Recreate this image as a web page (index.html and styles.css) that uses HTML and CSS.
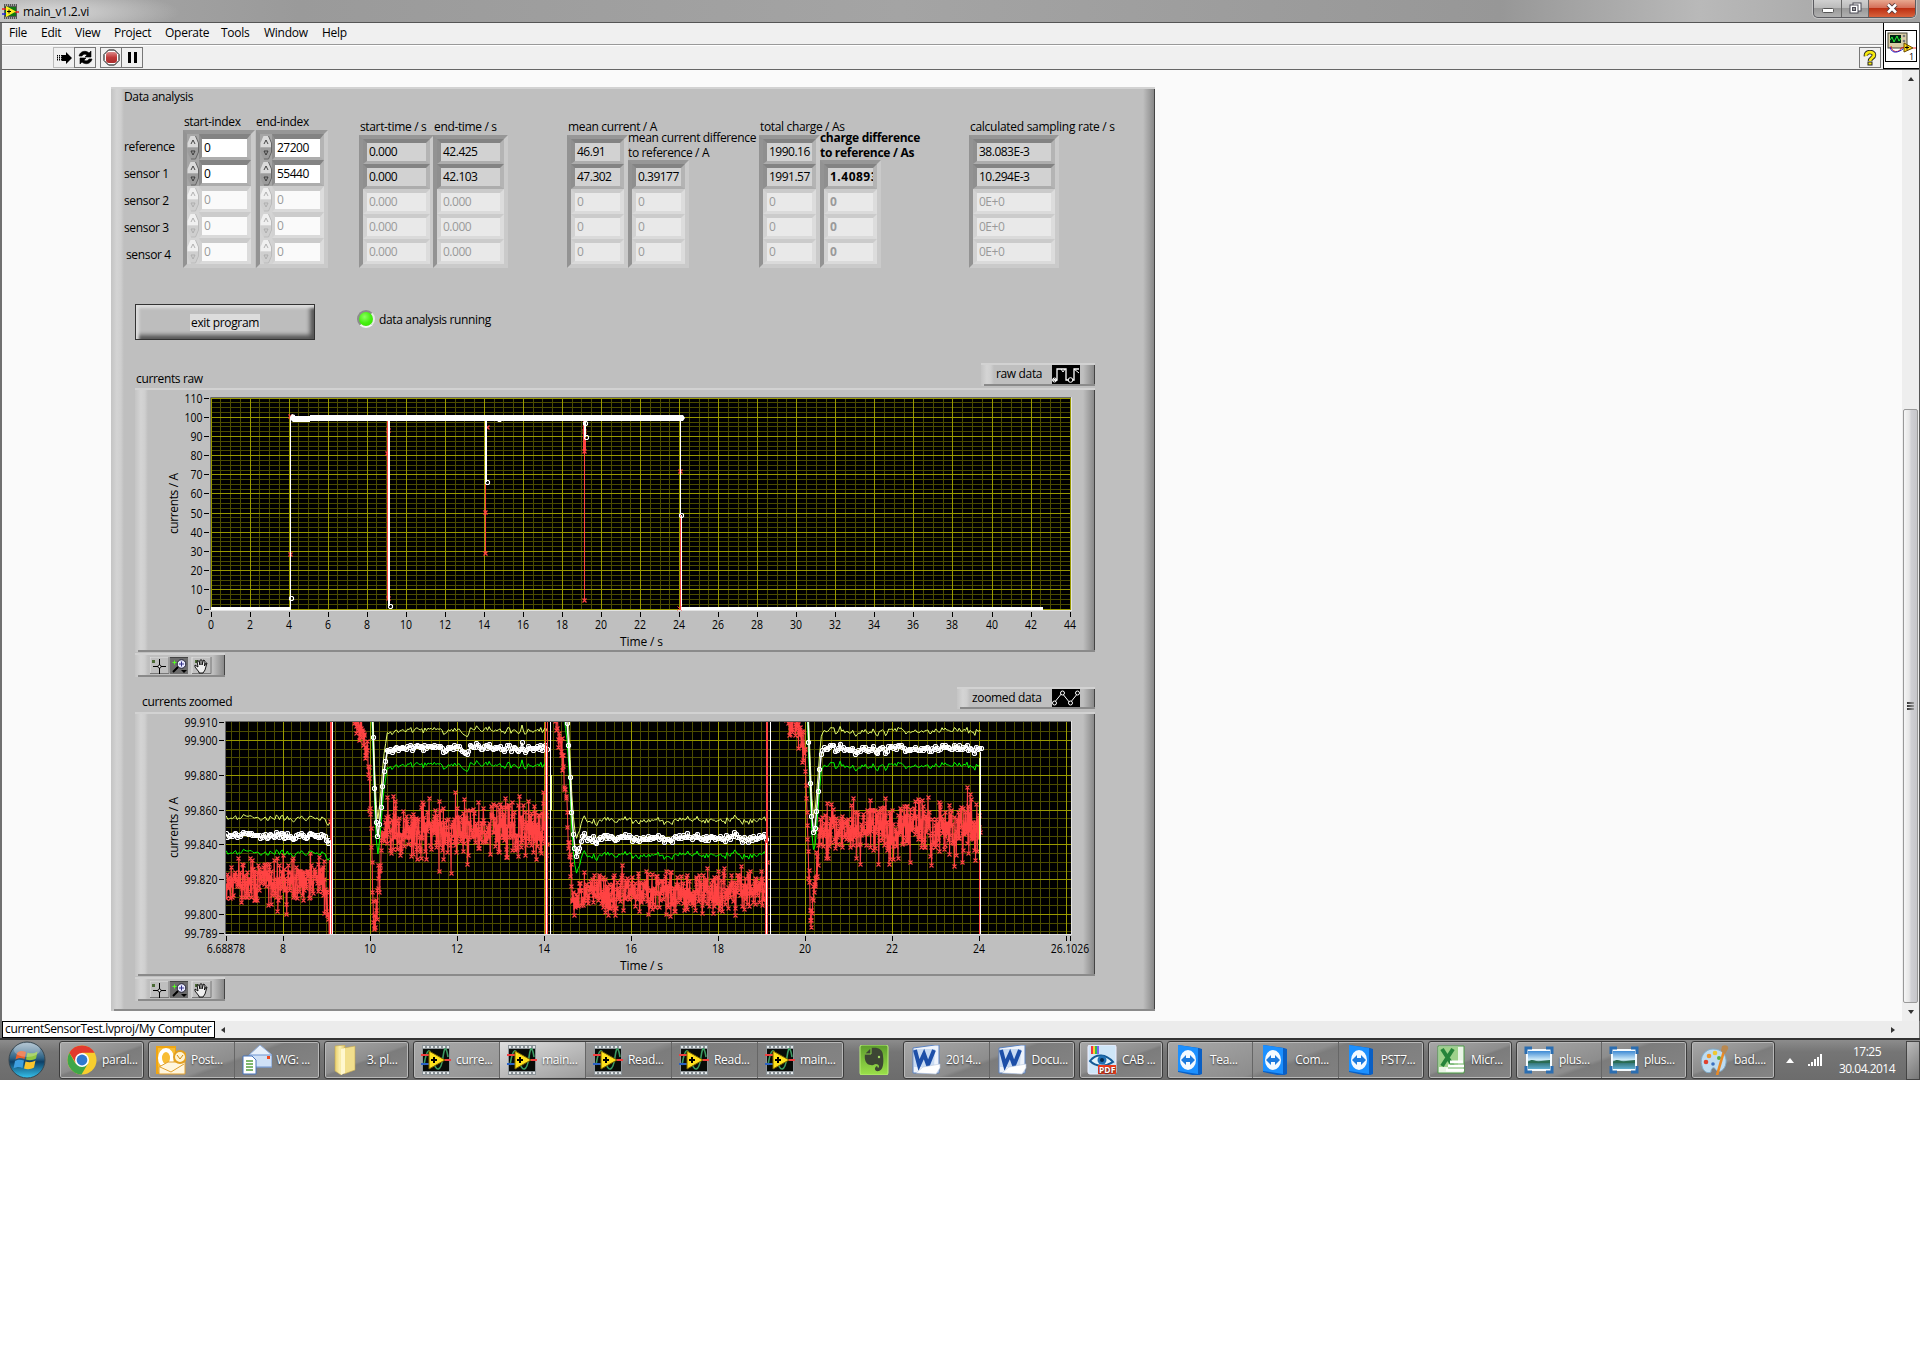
FILE: index.html
```html
<!DOCTYPE html>
<html lang="en">
<head>
<meta charset="utf-8">
<title>main_v1.2.vi</title>
<link rel="stylesheet" href="styles.css">
</head>
<body>
<svg class="defs" width="0" height="0">
  <defs>
    <linearGradient id="gOrb" x1="0" y1="0" x2="0" y2="1"><stop offset="0" stop-color="#9fb6c6"/><stop offset=".45" stop-color="#2d6285"/><stop offset=".55" stop-color="#0d3f66"/><stop offset="1" stop-color="#35c3ee"/></linearGradient>
    <linearGradient id="gFold" x1="0" y1="0" x2="1" y2="0"><stop offset="0" stop-color="#e9cf6c"/><stop offset=".5" stop-color="#fbf0b0"/><stop offset="1" stop-color="#e0c568"/></linearGradient>
    <linearGradient id="gGreen" x1="0" y1="0" x2="0" y2="1"><stop offset="0" stop-color="#5c9c2c"/><stop offset="1" stop-color="#9be04a"/></linearGradient>
    <linearGradient id="gSky" x1="0" y1="0" x2="0" y2="1"><stop offset="0" stop-color="#2d7fd0"/><stop offset=".5" stop-color="#d5effa"/><stop offset=".6" stop-color="#2d6d6a"/><stop offset="1" stop-color="#69b8e0"/></linearGradient>
    <linearGradient id="gStop" x1="0" y1="0" x2="0" y2="1"><stop offset="0" stop-color="#d88"/><stop offset=".5" stop-color="#c03a3a"/><stop offset="1" stop-color="#a82c2c"/></linearGradient>
    <symbol id="labview" viewBox="0 0 30 30">
      <rect x="1" y="0" width="28" height="30" fill="#8b9296"/>
      <path d="M2 2H28M2 28H28" stroke="#e4e8ea" stroke-width="2" stroke-dasharray="2 2"/>
      <rect x="2" y="4" width="26" height="22" fill="#080b08"/>
      <path d="M3 20C6 2 9 2 12 15S20 27 22 12S26 6 27 12" fill="none" stroke="#3c9a62" stroke-width="1.6"/>
      <path d="M0 10H9M22 15H30" stroke="#f04040" stroke-width="2"/><path d="M0 19H9" stroke="#2b62c4" stroke-width="2"/>
      <path d="M8 6L24 15L8 24Z" fill="#ffe11c" stroke="#7d6500"/><path d="M10 15H16M13 12V18" stroke="#000" stroke-width="2"/>
    </symbol>
    <symbol id="chrome" viewBox="0 0 30 30">
      <circle cx="15" cy="15" r="14.5" fill="#f7ce2e"/>
      <path d="M15 15L8.5 18.5L2.4 7.8A14.5 14.5 0 0 0 14.5 29.5L21 18.5Z" fill="#3fa648"/>
      <path d="M2.4 7.8A14.5 14.5 0 0 1 27.6 7.8H15L9 18Z" fill="#e23a2e"/>
      <circle cx="15" cy="15" r="7" fill="#fff"/><circle cx="15" cy="15" r="5.4" fill="#2f79cf"/>
    </symbol>
    <symbol id="outlook" viewBox="0 0 30 30">
      <path d="M0 1H20V29H0Z" fill="#f0a512"/><path d="M2 3H19V27H2Z" fill="#f8bd35"/>
      <ellipse cx="10" cy="13" rx="6" ry="8" fill="none" stroke="#fff" stroke-width="4"/>
      <path d="M12 17H29V29H3V22Z" fill="#fff6de" stroke="#e0a030"/><path d="M4 22L15 27L28 19" fill="none" stroke="#e0a030"/>
      <circle cx="24" cy="12" r="6" fill="#fff3d0" stroke="#e3a020" stroke-width="2"/><path d="M21 10L24 14L27 10" fill="none" stroke="#d08a10"/>
    </symbol>
    <symbol id="mail" viewBox="0 0 30 30">
      <path d="M7 10L18 0L30 10V22H7Z" fill="#e7f0fb" stroke="#90aedb"/><path d="M7 10H30V22H7Z" fill="#cfe0f6" stroke="#6f94cf"/>
      <rect x="25" y="11" width="3" height="3" fill="#f04a20"/>
      <path d="M1 11H10L14 15V29H1Z" fill="#fff" stroke="#4775bd"/>
      <path d="M4 16H11M4 19H11M4 22H11M4 25H11" stroke="#55a040" stroke-width="1.5"/>
    </symbol>
    <symbol id="folder" viewBox="0 0 30 30">
      <path d="M3 1L13 0V27L9 30L3 26Z" fill="url(#gFold)" stroke="#c5a850" stroke-width=".6"/>
      <path d="M12 3L23 1V25L12 29Z" fill="#f2df8d" stroke="#c5a850" stroke-width=".6"/><path d="M9 4L13 3V28L9 30Z" fill="#fff7cf"/>
    </symbol>
    <symbol id="evernote" viewBox="0 0 30 30">
      <rect x="1" y="0" width="28" height="30" rx="2" fill="url(#gGreen)" stroke="#b8f078"/>
      <path d="M6 9L12 3C19 2 24 4 24 11C25 18 24 25 20 26C15 27 15 22 18 21L19 23C21 22 20 19 17 19C14 19 15 21 12 20C7 20 5 15 6 9Z" fill="#3d4634"/>
      <path d="M6 9H12V3" fill="none" stroke="#8cd048"/><circle cx="20" cy="12" r="1.2" fill="#a5dc68"/>
    </symbol>
    <symbol id="word" viewBox="0 0 30 30">
      <path d="M2 3L24 0H28V28H2Z" fill="#eef3fb" stroke="#5c83c2"/><path d="M3 4H24L23 22H3Z" fill="#c9dbf3"/>
      <path d="M4 5L8 20L13 9L17 20L23 5" fill="none" stroke="#1d4fa8" stroke-width="4"/>
      <path d="M12 22L29 19V23L25 29L5 28Z" fill="#fff" stroke="#b5c5dc" stroke-width=".6"/>
    </symbol>
    <symbol id="pdf" viewBox="0 0 30 30">
      <rect x="1" y="0" width="28" height="29" rx="2" fill="#cfe6f8" stroke="#eef"/>
      <path d="M5 1V9" stroke="#e34" stroke-width="2"/><path d="M7 1V9" stroke="#fc3" stroke-width="2"/><path d="M9 1V9" stroke="#3b5" stroke-width="2"/><path d="M11 1V9" stroke="#76e" stroke-width="2"/>
      <path d="M3 16C9 8 19 9 26 17C18 22 9 22 3 16Z" fill="#dff2fb" stroke="#155a96" stroke-width="2"/><circle cx="15" cy="15" r="4.5" fill="#2271b4"/><circle cx="15" cy="15" r="2" fill="#042a50"/>
      <rect x="11" y="20" width="18" height="9" fill="#ee3b1c"/><text x="12" y="28" font-size="8.5" font-weight="700" fill="#fff" textLength="16">PDF</text>
    </symbol>
    <symbol id="teamviewer" viewBox="0 0 30 30">
      <path d="M3 0L24 3L27 4V29L22 31L3 27Z" fill="#0a5fc4"/><path d="M3 0L23 3V29L3 26Z" fill="#1c90ff"/>
      <ellipse cx="13" cy="15" rx="8" ry="10" fill="#f4faff"/><path d="M6 15L11 10V13H15V10L20 15L15 20V17H11V20Z" fill="#1c7ade"/>
    </symbol>
    <symbol id="excel" viewBox="0 0 30 30">
      <path d="M2 1H28V28H2Z" fill="#eaf5e6" stroke="#4b9a44"/><path d="M3 2H22V22H3Z" fill="#9ed18b"/>
      <path d="M6 4L17 21M17 4L6 21" stroke="#26843a" stroke-width="4"/><path d="M14 17H27M12 21H28M10 25H28" stroke="#fff" stroke-width="3"/><path d="M14 19H28M12 23H28" stroke="#76b86c"/>
    </symbol>
    <symbol id="viewer" viewBox="0 0 30 30">
      <rect x="3" y="5" width="24" height="20" fill="url(#gSky)" stroke="#f5fbff" stroke-width="2"/><path d="M4 17C9 12 12 18 17 16L26 15V18H4Z" fill="#2a6b52"/>
      <path d="M2 9V3H8M22 3H28V9M28 21V27H22M8 27H2V21" fill="none" stroke="#2b6db0" stroke-width="3"/>
    </symbol>
    <symbol id="paint" viewBox="0 0 30 30">
      <path d="M3 21C0 12 6 4 14 4C23 4 28 10 27 18C26 25 20 29 17 25C15 21 12 23 12 27C8 29 4 26 3 21Z" fill="#bfdcf0" stroke="#7faac8"/>
      <circle cx="7" cy="17" r="2.3" fill="#e0412e"/><circle cx="10" cy="11" r="2.3" fill="#f0962b"/><circle cx="16" cy="8" r="2.3" fill="#eec832"/><circle cx="20" cy="13" r="2" fill="#58b040"/><circle cx="14" cy="19" r="1.8" fill="#3c70c0"/>
      <path d="M25 6L18 30" stroke="#e88a26" stroke-width="2.6"/><path d="M23 1C27-1 30 1 29 4L26 9L22 6Z" fill="#b98850"/>
    </symbol>
    <symbol id="plotTools" viewBox="0 0 62 18">
      <path d="M0 17V0H19M42 17V0H61" fill="none" stroke="#e2e2e2"/><path d="M0 16.500H19V0M42 16.500H61V0" fill="none" stroke="#777"/>
      <rect x="20" y="0" width="18" height="17" fill="#6c6c6c"/><path d="M20 .5H38" stroke="#444"/>
      <rect x="2" y="3" width="3" height="3" fill="#4b6a35"/><rect x="45" y="3" width="3" height="3" fill="#4b6a35"/><path d="M22.500 5.500H26.500M24.500 3.500V7.500" stroke="#5f2" />
      <path d="M3 9.500H8M11 9.500H16M9.500 2V8M9.500 11V17" stroke="#000"/><circle cx="9.500" cy="9.500" r="1.500" fill="#fff" stroke="#000"/>
      <circle cx="31.500" cy="7" r="4.300" fill="#e8e8ff" stroke="#223"/><path d="M29 7H34M31.500 4.500V9.500" stroke="#338"/><path d="M28 10L23 15" stroke="#000" stroke-width="2"/><path d="M31 13H37L34 16Z" fill="#000"/>
      <path d="M49 15L45 10V8L48 10L47 4H49L50 8V3H52V8L53.500 3L55 4L54.500 9L56 6H57L55 13L53 16H49Z" fill="#eee" stroke="#000" stroke-width=".9"/>
    </symbol>
  </defs>
</svg>

<div class="desktop">
<div class="window">
  <header class="titlebar">
    <svg class="app-icon" width="17" height="15" viewBox="0 0 17 15"><rect x="2" y="0" width="13" height="15" fill="#555"/><path d="M3 1H15M3 14H15" stroke="#eee" stroke-dasharray="1 1"/><rect x="3" y="3" width="11" height="9" fill="#171"/><path d="M0 5H5M13 8H17" stroke="#e22" stroke-width="1.500"/><path d="M0 10H5" stroke="#22d" stroke-width="1.500"/><path d="M4 2L14 7.500L4 13Z" fill="#fe2"/><path d="M5 7.500H9M7 5.500V9.500" stroke="#000"/></svg>
    <span class="title">main_v1.2.vi</span>
    <div class="winbuttons">
      <span class="wb wb-min"><svg width="12" height="5"><rect x=".5" y=".5" width="11" height="4" rx="1" fill="#fff" stroke="#555"/></svg></span>
      <span class="wb wb-max"><svg width="13" height="12"><rect x="4" y="1" width="8" height="8" fill="#fff" stroke="#4a4a55"/><rect x="1" y="3" width="8" height="8" fill="#fff" stroke="#4a4a55"/><rect x="3.500" y="5.500" width="3" height="3" fill="#999" stroke="#4a4a55"/></svg></span>
      <span class="wb wb-close"><svg width="12" height="11" viewBox="0 0 12 11"><path d="M2 1.500L10 9.500M10 1.500L2 9.500" stroke="#54383a" stroke-width="4.500"/><path d="M2 1.500L10 9.500M10 1.500L2 9.500" stroke="#fff" stroke-width="2.600"/></svg></span>
    </div>
  </header>
  <div class="chrome">
    <div class="bars">
      <nav class="menubar">
        <span class="m1">File</span><span>Edit</span><span>View</span><span>Project</span><span>Operate</span><span>Tools</span><span>Window</span><span>Help</span>
      </nav>
      <div class="toolbar">
        <span class="tool tool-flat"><svg width="17" height="14" viewBox="0 0 17 14"><path d="M1.500 4V10M3.500 4V10M5.500 4V10" stroke="#000" stroke-dasharray="1.500 .5"/><path d="M6 4H10V1L16 7L10 13V10H6Z" fill="#000"/></svg></span>
        <span class="tool"><svg width="17" height="15" viewBox="0 0 17 15"><path d="M2 6C3 1 9 0 12 3L14 1V7H8L10 5C8 3.500 6 4 5 6Z" stroke="#000" stroke-width=".6"/><path d="M15 9C14 14 8 15 5 12L3 14V8H9L7 10C9 11.500 11 11 12 9Z" stroke="#000" stroke-width=".6"/></svg></span>
        <span class="tool tool-gap"><svg width="17" height="17" viewBox="0 0 17 17"><path d="M5.500 1H11.500L16 5.500V11.500L11.500 16H5.500L1 11.500V5.500Z" fill="#fff" stroke="#000"/><rect x="3" y="3" width="11" height="11" rx="3" fill="url(#gStop)"/></svg></span>
        <span class="tool"><svg width="11" height="11"><path d="M1 0H4V11H1ZM7 0H10V11H7Z"/></svg></span>
        <span class="tool tool-help"><svg width="14" height="16" viewBox="0 0 14 16"><path d="M3 6C2 1 11 1 11 5C11 8 7 8 7 11" fill="none" stroke="#222" stroke-width="4.500"/><path d="M3 6C2 1 11 1 11 5C11 8 7 8 7 11" fill="none" stroke="#f5e810" stroke-width="2.800"/><rect x="5" y="12" width="4" height="3" fill="#f5e810" stroke="#222"/></svg></span>
      </div>
    </div>
    <div class="vi-icon"><svg width="32" height="32" viewBox="0 0 32 32"><rect x=".5" y=".5" width="31" height="31" fill="#fff" stroke="#000"/><rect x="3" y="3" width="19" height="15" fill="#d8cda6" stroke="#443"/><rect x="5" y="5" width="11" height="8" fill="#021"/><path d="M5 10L7 7L9 12L12 6L14 11L16 8" fill="none" stroke="#2e3"/><circle cx="19" cy="6" r="1.300" fill="#777"/><circle cx="19" cy="11" r="1.300" fill="#777"/><path d="M6 16C6 23 15 23 16 18L20 17" fill="none" stroke="#d22"/><path d="M5 17C7 25 14 22 18 19" fill="none" stroke="#22c"/><path d="M19 13L28 18L19 22Z" fill="#fd1" stroke="#640"/><path d="M20 17.500H24M22 15.500V19.500" stroke="#000"/><path d="M28 18H31" stroke="#e33"/><text x="24" y="30" font-size="9" fill="#000">1</text></svg></div>
  </div>

  <main class="workarea">
    <div class="canvas">
      <section class="panel bevel">
        <h1 class="caption">Data analysis</h1>
        <div class="arrays">
          <div class="rowlabels"><span>reference</span><span>sensor 1</span><span>sensor 2</span><span>sensor 3</span><span class="shift">sensor 4</span></div>
          <div class="col c-start"><span class="lbl">start-index</span><div class="frame control" data-values="0|0|0|0|0"></div></div>
          <div class="col c-end"><span class="lbl">end-index</span><div class="frame control" data-values="27200|55440|0|0|0"></div></div>
          <div class="col c-stime"><span class="lbl">start-time / s</span><div class="frame" data-values="0.000|0.000|0.000|0.000|0.000"></div></div>
          <div class="col c-etime"><span class="lbl">end-time / s</span><div class="frame" data-values="42.425|42.103|0.000|0.000|0.000"></div></div>
          <div class="col c-mean"><span class="lbl">mean current / A</span><div class="frame" data-values="46.91|47.302|0|0|0"></div></div>
          <div class="col c-diff"><span class="lbl two">mean current difference<br>to reference / A</span><div class="frame" data-values="-|0.39177|0|0|0"></div></div>
          <div class="col c-charge"><span class="lbl">total charge / As</span><div class="frame" data-values="1990.16|1991.57|0|0|0"></div></div>
          <div class="col c-diff strong"><span class="lbl two">charge difference<br>to reference / As</span><div class="frame" data-values="-|1.40893|0|0|0"></div></div>
          <div class="col c-rate"><span class="lbl">calculated sampling rate / s</span><div class="frame" data-values="38.083E-3|10.294E-3|0E+0|0E+0|0E+0"></div></div>
        </div>
        <div class="actions">
          <button class="exit"><span>exit program</span></button>
          <i class="led"></i><span class="ledtext">data analysis running</span>
        </div>

        <div class="graphhead head1">
          <span class="gtitle">currents raw</span>
          <div class="legend bevel"><span>raw data</span><svg width="28" height="19" viewBox="0 0 28 19"><rect width="28" height="19" fill="#000"/><path d="M1 15H5V4H14V15H22V4H27" fill="none" stroke="#fff" stroke-width="1.300"/><path d="M1 13L4 16M22 4L27 8M9 4L11 7L13 4" stroke="#fff" fill="none"/><circle cx="2.500" cy="15" r="2" fill="none" stroke="#fff"/><circle cx="18.500" cy="15" r="2.300" fill="#000" stroke="#fff"/></svg></div>
        </div>
        <svg class="graph bevel" id="raw" width="960" height="264" viewBox="135 388 960 264"></svg>
        <div class="palette bevel"><svg width="62" height="18"><use href="#plotTools"/></svg></div>

        <div class="graphhead head2">
          <span class="gtitle t2">currents zoomed</span>
          <div class="legend bevel lg-wide"><span>zoomed data</span><svg width="28" height="18" viewBox="0 0 28 18"><rect width="28" height="18" fill="#000"/><path d="M2 14L10 4L18 14L26 4" fill="none" stroke="#fff"/><g fill="#000" stroke="#fff"><circle cx="2.500" cy="14" r="2"/><circle cx="10.500" cy="4" r="2"/><circle cx="18.500" cy="14" r="2"/><circle cx="25.500" cy="4" r="2"/></g></svg></div>
        </div>
        <svg class="graph bevel" id="zoomed" width="960" height="264" viewBox="135 712 960 264"></svg>
        <div class="palette bevel"><svg width="62" height="18"><use href="#plotTools"/></svg></div>
      </section>
    </div>
    <div class="vscroll"><i class="arrow up"></i><div class="thumb"><i></i><i></i><i></i></div><i class="arrow down"></i></div>
  </main>
  <footer class="hscroll"><span class="context">currentSensorTest.lvproj/My Computer</span><i class="arrow left"></i><span class="track"></span><i class="arrow right"></i></footer>
</div>

<div class="taskbar">
  <svg class="orb" width="38" height="38" viewBox="0 0 38 38"><circle cx="19" cy="19" r="18" fill="url(#gOrb)" stroke="#38464f"/><path d="M9 12C12 9 15 10 18 11L16.500 18C13 16.500 10 17 7.500 18.500Z" fill="#e8602c"/><path d="M19.500 11.500C23 13 26 12.500 29.500 10.500L28 17.500C25 19.500 21 19.500 18 18.500Z" fill="#8fc640"/><path d="M7 20C10 18 13 18.500 16 19.500L14.500 27C11 25.500 8.500 26 5.500 27.500Z" fill="#3f9fe0"/><path d="M17.500 20.500C21 21.500 24 21.500 27.500 19.500L26 26.500C23 28.500 19 28.500 16 27.500Z" fill="#fbc52c"/><ellipse cx="19" cy="9" rx="13" ry="7" fill="#fff" opacity=".25"/></svg>
  <div class="tasks" id="tasks"></div>
  <div class="tray">
    <svg class="tup" width="10" height="7"><path d="M1 6L5 1L9 6Z" fill="#fff"/></svg>
    <svg class="net" width="16" height="14"><path d="M1 11H3V13H1ZM4 9H6V13H4ZM7 6H9V13H7ZM10 4H12V13H10ZM13 1H15V13H13Z" fill="#fff"/></svg>
    <div class="clock">17:25<br>30.04.2014</div>
    <span class="peek"></span>
  </div>
</div>
</div>
<script src="app.js"></script>
</body>
</html>
```
FILE: styles.css
```css
* { box-sizing: border-box; }
body { margin: 0; background: #fff; font: 12px/16px "Open Sans", "Noto Sans", sans-serif; letter-spacing: -0.35px; color: #000; }
.defs { position: absolute; }
.desktop { width: 1920px; height: 1080px; display: flex; flex-direction: column; background: #777; overflow: hidden; }
.window { height: 1040px; display: flex; flex-direction: column; border-bottom: 2px solid #333; }
.titlebar { height: 23px; flex: none; display: flex; align-items: flex-start; padding-left: 2px; background: radial-gradient(ellipse 130px 22px at 50px 12px, #d8d8d8, transparent), linear-gradient(90deg, #a9a9a9, #9a9a9a 300px, #a4a4a4 900px, #979797 1500px, #b9b9b9 1700px, #a0a0a0); border-bottom: 1px solid #555; }
.app-icon { margin-top: 4px; }
.title { margin: 4px 0 0 4px; letter-spacing: -0.2px; }
.winbuttons { margin-left: auto; margin-right: 4px; display: flex; width: 103px; height: 18px; border: 1px solid #5b5b60; border-top: 0; border-radius: 0 0 5px 5px; overflow: hidden; background: linear-gradient(#d0d0d0, #bbb 45%, #999 50%, #b0b0b0); box-shadow: 0 0 0 1px #ddd8; }
.wb { display: flex; align-items: center; justify-content: center; border-right: 1px solid #666; padding-bottom: 1px; }
.wb-min { width: 28px; padding-top: 4px; }
.wb-max { width: 27px; }
.wb-close { flex: 1; border: 0; background: linear-gradient(#e8a890, #d5705a 45%, #bd3013 50%, #d8623c); }

.chrome { height: 47px; flex: none; display: flex; background: #f0f0f0; border-left: 2px solid #707070; border-right: 1px solid #555; border-bottom: 1px solid #666; }
.bars { flex: 1; }
.menubar { height: 22px; border-bottom: 1px solid #999; display: grid; grid-template-columns: 7px 32px 34px 39px 51px 56px 43px 58px 80px; align-items: center; padding-bottom: 1px; }
.menubar span { letter-spacing: -0.25px; white-space: nowrap; }
.m1 { grid-column: 2; }
.toolbar { height: 24px; border-top: 1px solid #fff; display: flex; align-items: flex-start; padding: 1px 2px 0 51px; }
.tool { width: 22px; height: 21px; border: 1px solid #777; display: flex; align-items: center; justify-content: center; }
.tool-flat { width: 21px; border-color: #bbb; border-right: 0; }
.tool-gap { margin-left: 4px; width: 21px; border-right: 0; }
.tool-help { margin-left: auto; }
.vi-icon { width: 36px; border: 1px solid #000; border-width: 0 0 1px 1px; background: #fff; padding: 7px 0 0 1px; }

.workarea { flex: 1; min-height: 0; display: flex; background: #fafafa; border-left: 2px solid #707070; border-right: 1px solid #555; }
.canvas { flex: 1; padding: 17px 0 0 109px; }
.bevel { background: linear-gradient(#d2d2d2, #d2d2d2) 0 0 / 100% 2px no-repeat, linear-gradient(#8a8a8a, #8a8a8a) 100% 100% / calc(100% - 3px) 2px no-repeat, linear-gradient(90deg, transparent, #8a8a8a 90%, #444 92%) 100% 0 / 12px 100% no-repeat, linear-gradient(90deg, #c4c4c4, #d4d4d4 45%, #cfcfcf 75%, #bfbfbf) 0 0 / 13px 100% no-repeat, #bfbfbf; }
.panel { width: 1044px; height: 924px; padding: 2px 0 0 13px; }
.caption { margin: 0; height: 16px; font-size: 12px; font-weight: 400; line-height: 16px; }
.arrays { height: 199px; display: flex; align-items: flex-start; }
.rowlabels { width: 59px; padding-top: 34px; display: flex; flex-direction: column; gap: 11px; }
.shift { margin-left: 2px; }
.col { display: flex; flex-direction: column; padding-top: 14px; flex: none; }
.lbl { height: 16px; white-space: nowrap; margin-left: 1px; }
.two { height: 30px; line-height: 15px; margin-left: 0; }
.c-start { width: 72px; padding-top: 9px; }
.c-end { width: 72px; padding-top: 9px; margin-left: 1px; }
.c-end .lbl { margin-left: 0; }
.c-stime { width: 75px; margin-left: 31px; padding-top: 14px; }
.c-etime { width: 75px; padding-top: 14px; margin-left: -1px; }
.c-mean { width: 61px; margin-left: 59px; }
.c-diff { width: 61px; padding-top: 25px; }
.c-charge { width: 61px; margin-left: 70px; }
.c-rate { width: 90px; margin-left: 88px; letter-spacing: -0.28px; }
.strong { font-weight: 700; letter-spacing: -0.3px; }
.frame { border: 4px solid; border-color: #979797 #cacaca #cacaca #939393; }
.row { height: 25px; display: flex; }
.control .row { height: 26px; }
.cell { flex: 1; min-width: 0; border: 4px solid; border-width: 4px 4px 3px 4px; border-color: #838383 #b4b4b4 #adadad #8f8f8f; background: #d2d2d2; padding-left: 2px; line-height: 17px; overflow: hidden; white-space: nowrap; letter-spacing: -0.5px; }
.strong .cell { letter-spacing: 0.5px; }
.control .cell { background: #fff; border-left-width: 3px; border-top-width: 5px; line-height: 17px; }
.off .cell { color: #9a9a9a; background: #e9e9e9; border-color: #cbcbcb #dcdcdc #dadada #d2d2d2; }
.control .off .cell { background: #fafafa; }
.spin { width: 12px; display: block; background: #a5a5a5; }
.off .spin { background: #d4d4d4; }

.actions { height: 36px; display: flex; margin-left: 11px; }
.exit { width: 180px; height: 36px; padding: 0; font: inherit; letter-spacing: inherit; border: 1px solid #333; background: #bdbdbd; box-shadow: inset 3px 3px 3px #ddd, inset -4px -4px 4px #555; }
.exit span { background: #dcdcdc; padding: 0 1px; position: relative; top: 1px; }
.led { width: 18px; height: 18px; margin: 6px 0 0 42px; border-radius: 50%; border: 2px solid #999; border-color: #8c8c8c #e8e8e8 #f5f5f5 #8c8c8c; background: radial-gradient(circle at 40% 35%, #8dff60, #45f010 50%, #35d800); }
.ledtext { margin: 8px 0 0 4px; }

.graphhead { display: flex; justify-content: space-between; margin-left: 11px; width: 960px; }
.head1 { margin-top: 23px; height: 25px; }
.head2 { margin-top: 10px; height: 25px; }
.gtitle { margin: 8px 0 0 1px; }
.t2 { margin: 7px 0 0 7px; }
.legend { width: 114px; height: 23px; display: flex; padding: 2px 0 0 15px; }
.legend svg { margin-left: auto; margin-right: 15px; }
.lg-wide { width: 138px; height: 22px; }
.legend span { white-space: nowrap; padding-top: 1px; }
.graph { display: block; margin-left: 11px; width: 960px; height: 264px; }
.graph text { font-size: 12px; letter-spacing: 0; }
.palette { width: 90px; height: 24px; margin: 1px 0 0 11px; padding: 4px 0 0 15px; }
.palette svg { display: block; }

.vscroll { width: 17px; background: #eee; display: flex; flex-direction: column; align-items: center; }
.arrow { display: block; width: 0; height: 0; border: 3px solid transparent; }
.up { border-bottom: 4px solid #333; border-top: 0; margin-top: 7px; }
.down { border-top: 4px solid #333; border-bottom: 0; margin: auto 0 7px; }
.thumb { width: 15px; height: 594px; margin-top: 328px; border: 1px solid #999; border-radius: 2px; background: linear-gradient(90deg, #f5f5f5, #e6e6e6 40%, #cfcfd4 55%, #c6c6ca); display: flex; flex-direction: column; align-items: center; justify-content: center; gap: 1px; }
.thumb i { width: 7px; height: 2px; background: linear-gradient(90deg, #333, #999); }
.hscroll { height: 17px; flex: none; background: #ececec; border-left: 2px solid #707070; border-right: 1px solid #777; display: flex; align-items: center; padding-right: 24px; }
.context { width: 213px; height: 17px; border: 1px solid #000; background: #fff; line-height: 14px; padding-left: 2px; letter-spacing: -0.34px; white-space: nowrap; }
.left { border-right: 4px solid #333; border-left: 0; margin-left: 6px; }
.right { border-left: 4px solid #333; border-right: 0; }
.track { flex: 1; }

.taskbar { height: 40px; display: flex; background: linear-gradient(#8c8c8c, #757575 30%, #6c6c6c); color: #fff; }
.orb { margin: 1px 13px 0 8px; }
.tasks { display: flex; align-items: center; gap: 4px; }
.group { height: 38px; display: flex; border: 1px solid #3c3c3c; border-radius: 3px; box-shadow: inset 0 0 0 1px #b8b8b8; background: linear-gradient(160deg, #a8a8a8, #8d8d8d 48%, #7c7c7c 52%, #858585); }
.task { flex: 1; min-width: 0; display: flex; align-items: center; padding-left: 7px; border-left: 1px solid #666; text-shadow: 0 1px 2px #222; letter-spacing: -0.3px; }
.task:first-child { border-left: 0; }
.task svg { margin-right: 5px; flex: none; }
.task.active { background: linear-gradient(160deg, #e0e0e0, #bcbcbc 50%, #9c9c9c); }
.bare { width: 51px; display: flex; justify-content: center; }
.tray { margin-left: auto; display: flex; align-items: center; }
.tup { margin-right: 12px; }
.net { margin-right: 15px; }
.clock { width: 58px; text-align: center; line-height: 17px; margin-right: 10px; letter-spacing: -0.5px; }
.peek { width: 14px; height: 39px; border: 1px solid #444; background: linear-gradient(135deg, #bbb, #777); }
```
FILE: app.js
```js
// Array indicators and controls
document.querySelectorAll('.frame').forEach(function (frame) {
  var control = frame.classList.contains('control');
  frame.innerHTML = frame.dataset.values.split('|').map(function (v, i) {
    if (v === '-') return '';
    var off = i > 1, dark = off ? '#aaa' : '#333', hi = off ? '#f0f0f0' : '#dadada', lo = off ? '#cfcfcf' : '#9c9c9c';
    var edge = off ? '#bbb' : '#666';
    var spin = control ? '<svg class="spin" width="12" height="26"><path d="M.5 13.500V9L3.500 2H8.500L11.500 9V13.500Z" fill="' + hi + '"/><path d="M.5 13.500H11.500V18L8.500 25H3.500L.5 18Z" fill="' + lo + '"/><path d="M8.500 2L11.500 9V18L8.500 25H4" fill="none" stroke="' + edge + '"/><path d="M4 10L6 6L8 10M4 17H8L6 21Z" fill="none" stroke="' + dark + '" stroke-width=".9"/></svg>' : '';
    return '<div class="row' + (off ? ' off' : '') + '">' + spin + '<span class="cell">' + v + '</span></div>';
  }).join('');
});

// Seeded noise so that the traces are stable
var seed = 20140430;
function rnd() { seed = (seed * 1664525 + 1013904223) >>> 0; return seed / 4294967296; }
function noise() { return (rnd() + rnd() + rnd() + rnd() - 2) * 1.73; }

function grid(o) {
  var s = '<rect x="' + (o.x0 - .5) + '" y="' + (o.y0 - .5) + '" width="' + (o.x1 - o.x0 + 1) + '" height="' + (o.y1 - o.y0 + 1) + '" fill="#000" stroke="#e2e2e2"/><path d="M' + (o.x0 - .5) + ' ' + o.y1 + 'V' + (o.y0 - .5) + 'H' + o.x1 + '" fill="none" stroke="#666"/>';
  function lines(list, vertical, color) {
    return '<path stroke="' + color + '" d="' + list.map(function (v) {
      return vertical ? 'M' + (Math.floor(o.X(v)) + .5) + ' ' + o.y0 + 'V' + o.y1 : 'M' + o.x0 + ' ' + (Math.floor(o.Y(v)) + .5) + 'H' + o.x1;
    }).join('') + '"/>';
  }
  function range(a, b, d) { var r = []; for (var v = a; v <= b + d / 100; v += d) r.push(v); return r; }
  s += lines(range(o.xa, o.xb, o.xm), true, '#4c4c00') + lines(range(o.ya, o.yb, o.ym), false, '#4c4c00');
  s += lines(o.xticks, true, '#999900') + lines(o.yticks, false, '#999900');
  o.ylabels.forEach(function (l) {
    var y = Math.floor(o.Y(l[0])) + .5;
    s += '<path d="M' + (o.x0 - 7) + ' ' + y + 'h5" stroke="#000"/><text x="' + (o.x0 - 8.500) + '" y="' + (y + 4.500) + '" text-anchor="end" textLength="' + l[1].length * (l[1].length > 3 ? 5.500 : 6) + '" lengthAdjust="spacingAndGlyphs">' + l[1] + '</text>';
  });
  o.xlabels.forEach(function (l) {
    var x = Math.floor(o.X(l[0])) + .5;
    s += '<path d="M' + x + ' ' + (o.y1 + 2) + 'v5" stroke="#000"/>';
    if (l[1]) s += '<text x="' + (x - .5) + '" y="' + (o.y1 + 19) + '" text-anchor="middle" textLength="' + l[1].length * (l[1].length > 3 ? 5.500 : 6) + '" lengthAdjust="spacingAndGlyphs">' + l[1] + '</text>';
  });
  s += '<text x="641.5" y="' + (o.y1 + 36) + '" text-anchor="middle" textLength="43">Time / s</text>';
  s += '<text transform="translate(177.5 ' + (o.mid - .5) + ') rotate(-90)" text-anchor="middle" textLength="61">currents / A</text>';
  return s;
}
function cross(x, y) { x = Math.floor(x) + .5; y = Math.floor(y) + .5; return 'M' + (x - 2) + ' ' + (y - 2) + 'l4 4m0 -4l-4 4'; }
function ring(x, y) { x = Math.floor(x) + .5; y = Math.floor(y) + .5; return 'M' + (x - 2) + ' ' + (y - 1) + 'v2l1 1h2l1 -1v-2l-1 -1h-2z'; }

(function raw() {
  var o = { x0: 211, x1: 1071, y0: 398, y1: 610, mid: 504, xa: 0, xb: 44, xm: .5, ya: 0, yb: 110, ym: 2.5,
    X: function (v) { return 211 + v * 19.525; }, Y: function (v) { return 609 - v * 19.17 / 10; }, xticks: [], yticks: [], xlabels: [], ylabels: [] };
  for (var i = 0; i <= 44; i += 2) { o.xticks.push(i); o.xlabels.push([i, '' + i]); }
  for (i = 0; i <= 110; i += 10) { o.yticks.push(i); o.ylabels.push([i, '' + i]); }
  var s = grid(o);
  s += '<g fill="none" stroke="#ff4343"><path d="M387.500 418V600M485.500 418V553M584.500 418V600"/><path d="M584.500 418V451" stroke-width="3"/><path stroke-width="1.200" d="' +
    cross(290, 554) + cross(388, 430) + cross(387, 453) + cross(388, 598) + cross(485, 512) + cross(485, 553) + cross(487, 427) + cross(584, 451) + cross(584, 600) + cross(680, 471) + cross(584, 431) + cross(290, 416) + '"/></g>';
  s += '<g fill="#fff"><rect x="211" y="607" width="80" height="3"/><path d="M290 417L292 414L295 415V416H310V415H683L685 418L683 421H310V422H293L290 419Z"/><rect x="290" y="418" width="1" height="191"/><rect x="388" y="418" width="2" height="188"/><rect x="485" y="418" width="2" height="64"/><rect x="584" y="418" width="2" height="19"/><rect x="680" y="418" width="1" height="97"/><rect x="681" y="515" width="1" height="95"/><rect x="681" y="607" width="362" height="3"/></g>';
  s += '<path d="M680.500 515V610" stroke="#ff4343"/><path d="' + cross(679, 608) + '" stroke="#ff4343"/><path fill="none" stroke="#fff" stroke-width="1.100" d="' + ring(291, 598) + ring(390, 606) + ring(487, 482) + ring(586, 437) + ring(585, 423) + ring(681, 515) + ring(499, 419) + '"/>';
  document.getElementById('raw').innerHTML = s;
})();

(function zoomed() {
  var o = { x0: 226, x1: 1071, y0: 722, y1: 934, mid: 828, xa: 6.8, xb: 26.01, xm: .2, ya: 99.79, yb: 99.909, ym: .005,
    X: function (v) { return 370.3 + (v - 10) * 43.52; }, Y: function (v) { return 740.5 + (99.9 - v) * 1740; },
    xticks: [8, 10, 12, 14, 16, 18, 20, 22, 24, 26], yticks: [99.9, 99.88, 99.86, 99.84, 99.82, 99.8],
    xlabels: [[6.7, '6.68878'], [26.1, '26.1026'], [26, '']], ylabels: [[99.9105, '99.910'], [99.789, '99.789']] };
  for (var i = 8; i < 26; i += 2) o.xlabels.push([i, '' + i]);
  o.yticks.forEach(function (v) { o.ylabels.push([v, v.toFixed(3)]); });
  var s = grid(o);
  function at(keys, t) {
    for (var k = 1; k < keys.length; k++) if (t <= keys[k][0]) {
      var a = keys[k - 1], b = keys[k], f = (t - a[0]) / (b[0] - a[0] || 1);
      return a[1] + (b[1] - a[1]) * f;
    }
    return keys[keys.length - 1][1];
  }
  var reds = [
    [.0068, [[6.69, 819], [8.93, 819], [9.02, 798], [9.06, 790]]],
    [.0083, [[9.6, 916], [9.8, 908], [9.95, 888], [10.02, 850], [10.08, 790], [10.18, 815], [10.3, 848], [14.06, 850]]],
    [.0063, [[14.25, 915], [14.42, 890], [14.52, 860], [14.62, 822], [14.68, 800], [14.8, 812], [19.07, 814]]],
    [.0083, [[19.55, 918], [19.85, 904], [20, 890], [20.07, 830], [20.12, 792], [20.22, 818], [20.36, 848], [24.01, 850]]]
  ];
  var line = '', marks = '';
  reds.forEach(function (r) {
    var first = true, start = r[1][0][0], end = r[1][r[1].length - 1][0];
    for (var t = start; t <= end; t += .0103) {
      var sg = (start > 9 && t < start + .8) ? r[0] * .7 : r[0];
      var v = 99 + at(r[1], t) / 1000 + Math.round(noise() * sg * 1000) / 1000;
      var x = o.X(t).toFixed(1), y = o.Y(v).toFixed(1);
      line += (first ? 'M' : 'L') + x + ' ' + y; first = false;
      marks += cross(+x, +y);
    }
  });
  var whites = [
    [[6.69, 845], [8.9, 846], [9.0, 842], [9.1, 843]],
    [[10.03, 925], [10.07, 900], [10.12, 860], [10.17, 844], [10.24, 861], [10.3, 881], [10.38, 895.5], [14.08, 895.5]],
    [[14.45, 925], [14.55, 903], [14.6, 876], [14.66, 845], [14.72, 833], [14.8, 840], [14.9, 843.5], [19.12, 844.5]],
    [[20.04, 925], [20.1, 881], [20.17, 846], [20.22, 848], [20.28, 868], [20.36, 890], [20.42, 895], [24.05, 895.5]]
  ];
  var up = '', mid = '', low = '', rings = '';
  whites.forEach(function (w) {
    var n = 0;
    for (var t = w[0][0], j = 0; t <= w[w.length - 1][0]; t += .036, j++) {
      n = n * .35 + noise() * .0011;
      var v = 99 + at(w, t) / 1000 + n, c = j ? 'L' : 'M', x = o.X(t).toFixed(1);
      mid += c + x + ' ' + o.Y(v).toFixed(1); up += c + x + ' ' + o.Y(v + .0102).toFixed(1); low += c + x + ' ' + o.Y(v - .0098).toFixed(1);
      rings += ring(+x, +o.Y(v).toFixed(1));
    }
  });
  up += 'M979.500 758V934M551.500 775V810'; low += 'M551.500 790V810';
  s += '<clipPath id="plot"><rect x="226" y="722" width="845" height="212"/></clipPath><g clip-path="url(#plot)" fill="none">' +
    '<path stroke="#ff4343" stroke-width="1.100" d="' + line + '"/><path stroke="#ff4343" stroke-width="1.100" d="' + marks + cross(330, 821) + cross(767, 862) + '"/>' +
    '<path stroke="#00ff00" d="' + low + '"/><path stroke="#e6ff70" d="' + up + '"/><path stroke="#fff" stroke-width="1.500" d="' + mid + '"/><path stroke="#fff" stroke-width="1.100" d="' + rings + '"/>' +
    '<path stroke="#ff4343" d="M329.500 860V934M331.500 722V934M330.500 722V842M545.500 722V934M547.500 722V934M765.500 840V934M766.500 722V845M767.500 722V934M979.500 860V934"/>' +
    '<path stroke="#fff" d="M330.500 840V934M332.500 722V934M546.500 749V934M550.500 722V934M766.500 843V934M770.500 722V934M980.500 752V934"/></g>';
  document.getElementById('zoomed').innerHTML = s;
})();

// Taskbar groups: width in pixels, then icon and caption of each window
var groups = [
  [85, ['chrome', 'paral...']], [172, ['outlook', 'Post...'], ['mail', 'WG: ...']], [85, ['folder', '3. pl...']],
  [431, ['labview', 'curre...'], ['labview', 'main...', 1], ['labview', 'Read...'], ['labview', 'Read...'], ['labview', 'main...']],
  [0, ['evernote', '']], [172, ['word', '2014...'], ['word', 'Docu...']], [84, ['pdf', 'CAB ...']],
  [257, ['teamviewer', 'Tea...'], ['teamviewer', 'Com...'], ['teamviewer', 'PST7...']], [84, ['excel', 'Micr...']],
  [171, ['viewer', 'plus...'], ['viewer', 'plus...']], [84, ['paint', 'bad....']]
];
document.getElementById('tasks').innerHTML = groups.map(function (g) {
  function icon(n) { return '<svg width="30" height="30"><use href="#' + n + '"/></svg>'; }
  if (!g[0]) return '<div class="bare">' + icon(g[1][0]) + '</div>';
  return '<div class="group" style="width:' + g[0] + 'px">' + g.slice(1).map(function (t) {
    return '<div class="task' + (t[2] ? ' active' : '') + '">' + icon(t[0]) + '<span>' + t[1] + '</span></div>';
  }).join('') + '</div>';
}).join('');
```
